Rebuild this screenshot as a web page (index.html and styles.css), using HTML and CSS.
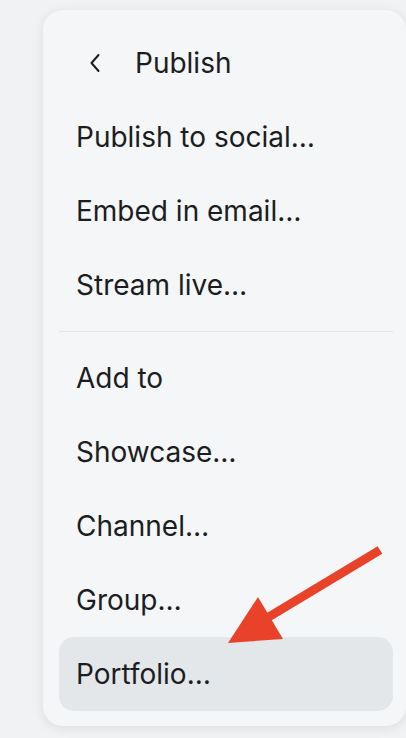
FILE: index.html
```html
<!DOCTYPE html>
<html lang="en">
<head>
  <meta charset="UTF-8" />
  <meta name="viewport" content="width=device-width, initial-scale=1.0" />
  <title>Publish menu</title>
  <link rel="stylesheet" href="styles.css">
</head>
<body>
<div class="menu">
  <div class="menu-head">
    <svg class="back" width="12" height="20" viewBox="0 0 12 20"><path d="M9.5 2 L2.5 10 L9.5 18" fill="none" stroke="#1b1d21" stroke-width="2" stroke-linecap="round" stroke-linejoin="round"/></svg>
    <span>Publish</span>
  </div>
  <div class="item">Publish to social…</div>
  <div class="item">Embed in email…</div>
  <div class="item">Stream live…</div>
  <div class="divider"></div>
  <div class="item">Add to</div>
  <div class="item">Showcase…</div>
  <div class="item">Channel…</div>
  <div class="item">Group…</div>
  <div class="item active">Portfolio…</div>
</div>
<!-- annotation arrow -->
<svg class="pointer" width="406" height="738" viewBox="0 0 406 738">
  <line x1="380" y1="550" x2="262" y2="621" stroke="#e8432a" stroke-width="9"/>
  <polygon points="228,643 258,597 283,639" fill="#e8432a"/>
</svg>
</body>
</html>
```

FILE: styles.css
```css
* { box-sizing: border-box; margin: 0; padding: 0; }
html, body { width: 100%; height: 100%; }
body {
  background: #f1f2f4;
  font-family: Inter, "Noto Sans", sans-serif;
  color: #1b1d21;
  padding: 10px 0 0 43px;
  overflow: hidden;
  position: relative;
}
.menu {
  width: 363px;
  background: #f5f6f8;
  border-radius: 20px;
  box-shadow: 0 2px 12px rgba(0,0,0,.09);
  padding: 16px 13px 15px 16px;
}
.menu-head, .item {
  height: 74px;
  display: flex; align-items: center;
  font-size: 28px;
  letter-spacing: 0;
}
.menu-head { padding-left: 30px; gap: 34px; }
.item { padding-left: 17px; border-radius: 15px; }
.item.active { background: #e4e7ea; }
.divider { height: 1px; background: #e2e4e7; margin: 9px 0; }
.pointer { position: absolute; top: 0; left: 0; pointer-events: none; }
```
